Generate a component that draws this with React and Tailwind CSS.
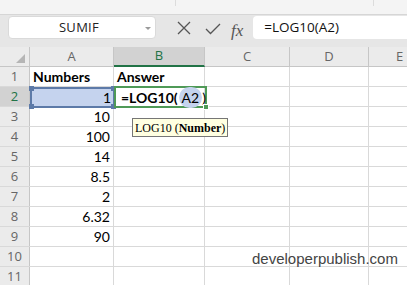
import React from "react";

const dataA = ["Numbers", "1", "10", "100", "14", "8.5", "2", "6.32", "90", "", ""];

function Row({ n }) {
  const selected = n === 2;
  return (
    <div className="flex h-[20px] border-b border-[#d9d9d9]">
      <div
        className={`w-[30px] shrink-0 flex items-center justify-center text-[13px] border-r border-[#c6c6c6] ${
          selected ? "bg-[#d2d2d2] text-[#217346]" : "bg-[#ebebeb] text-[#666]"
        }`}
        style={{ fontFamily: "'Open Sans', sans-serif" }}
      >
        {n}
      </div>
      <div
        className={`w-[84px] shrink-0 flex items-center px-[3px] border-r border-[#d9d9d9] text-[14px] text-black ${
          n === 1 ? "justify-start font-bold" : "justify-end"
        }`}
      >
        {n === 2 ? "" : dataA[n - 1]}
      </div>
      <div className="w-[91px] shrink-0 flex items-center px-[3px] border-r border-[#d9d9d9] text-[14px] font-bold text-black">
        {n === 1 ? "Answer" : ""}
      </div>
      <div className="w-[85px] shrink-0 border-r border-[#d9d9d9]" />
      <div className="w-[79px] shrink-0 border-r border-[#d9d9d9]" />
      <div className="flex-1" />
    </div>
  );
}

export default function App() {
  return (
    <div
      className="relative w-[407px] h-[285px] overflow-hidden bg-white"
      style={{ fontFamily: "Lato, 'Noto Sans', sans-serif" }}
    >
      {/* top strip */}
      <div className="relative h-[15px] bg-[#f4f4f4] border-b border-[#d6d6d6]">
        <div className="absolute left-[175px] top-0 h-[6px] w-px bg-[#dcdcdc]" />
        <div className="absolute left-[373px] top-0 h-[6px] w-px bg-[#dcdcdc]" />
      </div>
      {/* formula bar */}
      <div className="h-[32px] bg-[#e6e6e6] flex items-start pt-[1px]">
        <div
          className="ml-[8px] w-[148px] h-[23px] bg-white rounded-[4px] border border-[#dadada] flex items-center relative"
          style={{ fontFamily: "'Open Sans', sans-serif" }}
        >
          <span className="flex-1 text-center text-[13px] text-[#222] tracking-[0.3px] pr-[6px]">SUMIF</span>
          <svg className="absolute right-[4px] top-[10px]" width="6" height="4" viewBox="0 0 6 4">
            <path d="M0 0 L6 0 L3 3 Z" fill="#9a9a9a" />
          </svg>
        </div>
        <div className="w-[21px]" />
        <svg width="14" height="14" viewBox="0 0 14 14" className="mt-[5px]">
          <path d="M1 1 L13 13 M13 1 L1 13" stroke="#555" strokeWidth="1.3" />
        </svg>
        <div className="w-[14px]" />
        <svg width="16" height="12" viewBox="0 0 16 12" className="mt-[7px]">
          <path d="M1 6 L5.5 10.5 L15 1" stroke="#555" strokeWidth="1.3" fill="none" />
        </svg>
        <div className="w-[10px]" />
        <span
          className="mt-[2px] text-[17px] italic text-[#555]"
          style={{ fontFamily: "'Liberation Serif', serif" }}
        >
          fx
        </span>
        <div className="w-[10px]" />
        <div
          className="flex-1 h-[23px] bg-white rounded-l-[4px] flex items-center pl-[11px] text-[13.5px] text-[#111]"
          style={{ fontFamily: "'Open Sans', sans-serif" }}
        >
          =LOG10(A2)
        </div>
      </div>
      {/* column headers */}
      <div
        className="flex h-[20px] bg-[#ebebeb] border-b border-[#c6c6c6] text-[13px] text-[#666]"
        style={{ fontFamily: "'Open Sans', sans-serif" }}
      >
        <div className="w-[30px] shrink-0 border-r border-[#c6c6c6] relative">
          <svg className="absolute right-[4px] bottom-[3px]" width="9" height="9" viewBox="0 0 9 9">
            <path d="M9 0 L9 9 L0 9 Z" fill="#b5b5b5" />
          </svg>
        </div>
        <div className="w-[84px] shrink-0 border-r border-[#c6c6c6] flex items-center justify-center">A</div>
        <div className="w-[91px] shrink-0 border-r border-[#c6c6c6] bg-[#d2d2d2] text-[#217346] flex items-center justify-center border-b-2 border-b-[#217346] -mb-px">
          B
        </div>
        <div className="w-[85px] shrink-0 border-r border-[#c6c6c6] flex items-center justify-center">C</div>
        <div className="w-[79px] shrink-0 border-r border-[#c6c6c6] flex items-center justify-center">D</div>
        <div className="flex-1 flex items-center justify-start pl-[27px]">E</div>
      </div>
      {/* rows */}
      {Array.from({ length: 11 }, (_, i) => (
        <Row key={i} n={i + 1} />
      ))}

      {/* A2 reference highlight */}
      <div className="absolute left-[30px] top-[87px] w-[85px] h-[21px] bg-[#c5d3ee] border-2 border-[#5d7aa8] flex items-center justify-end pr-[2px] text-[14px] text-black">
        1
        <div className="absolute -left-[3px] -top-[3px] w-[5px] h-[5px] bg-[#5d7aa8]" />
        <div className="absolute -right-[3px] -top-[3px] w-[5px] h-[5px] bg-[#5d7aa8]" />
        <div className="absolute -left-[3px] -bottom-[3px] w-[5px] h-[5px] bg-[#5d7aa8]" />
        <div className="absolute -right-[3px] -bottom-[3px] w-[5px] h-[5px] bg-[#5d7aa8]" />
      </div>
      {/* B2 active editing cell */}
      <div className="absolute left-[114px] top-[86px] w-[93px] h-[22px] border-2 border-[#4f9a57] flex items-center pl-[5px] text-[14px] font-bold text-black">
        <span>=LOG10(</span>
        <span className="bg-[#c5d3ee] rounded-full px-[3px] ml-[1px] font-normal">A2</span>
        <span className="w-[1.5px] h-[14px] bg-black" />
        <span className="font-normal">)</span>
        <div className="absolute -right-[4px] -bottom-[4px] w-[6px] h-[6px] bg-[#4f9a57] border border-white" />
      </div>
      {/* tooltip */}
      <div
        className="absolute left-[132px] top-[118px] h-[19px] px-[2px] bg-[#ffffe1] border border-[#767676] flex items-center text-[12px] text-black whitespace-nowrap"
        style={{ fontFamily: "'Liberation Serif', serif" }}
      >
        LOG10 (<b>Number</b>)
      </div>
      {/* watermark */}
      <div
        className="absolute left-[252px] top-[248px] text-[15px] text-[#444]"
        style={{ fontFamily: "'Liberation Sans', Arial, sans-serif" }}
      >
        developerpublish.com
      </div>
    </div>
  );
}
